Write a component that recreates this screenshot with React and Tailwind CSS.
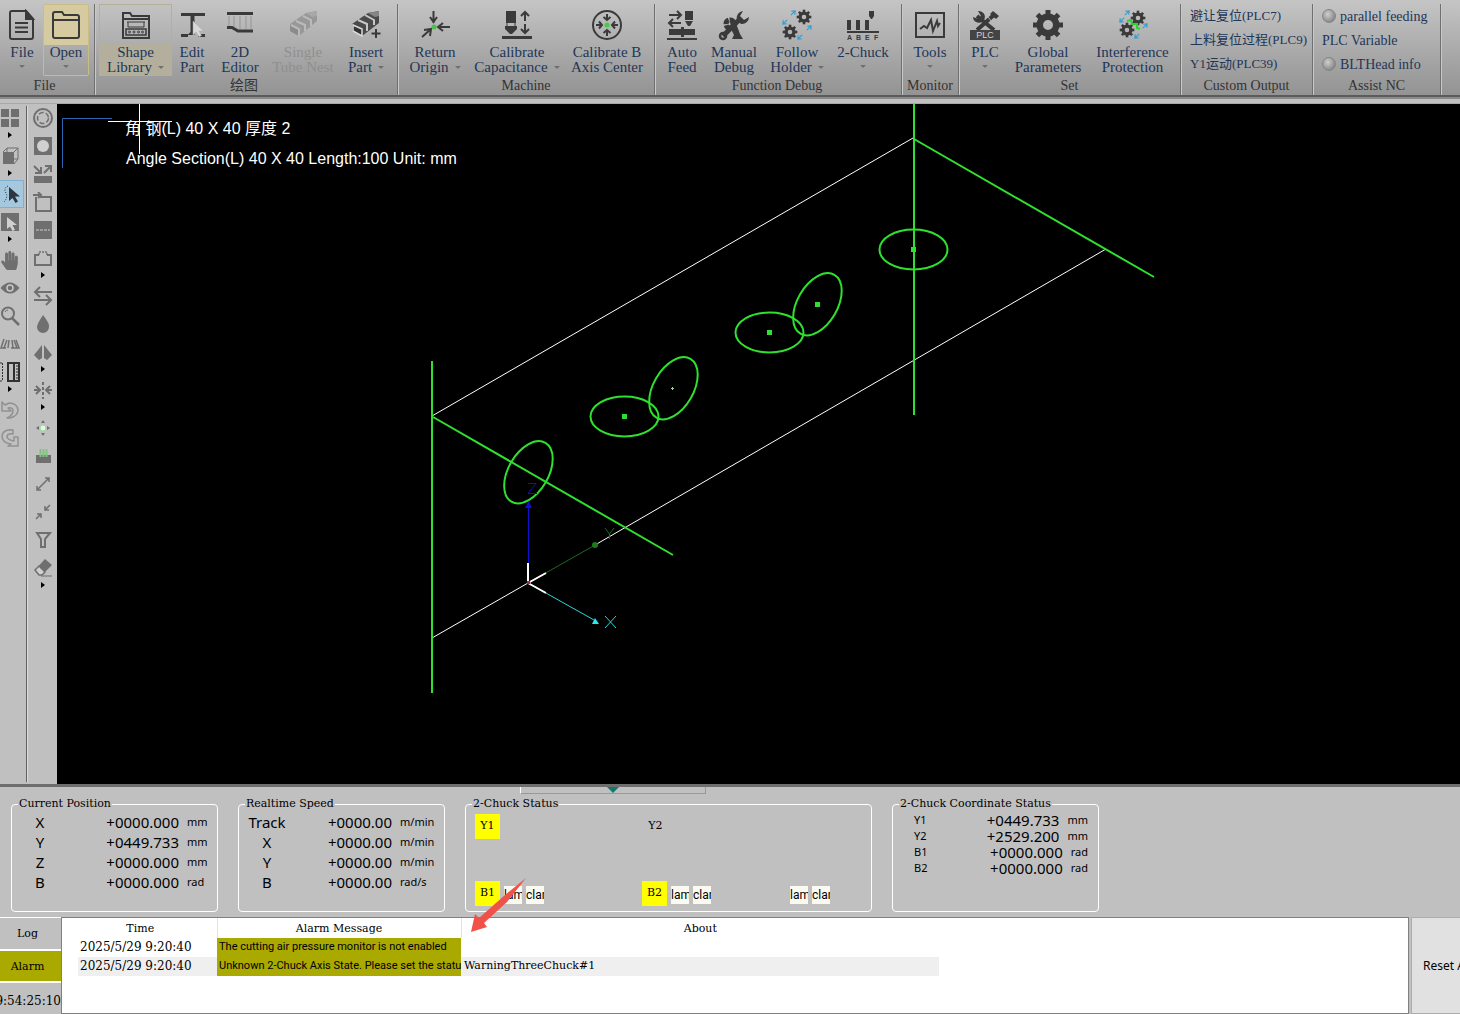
import React from "react";
import { FaHandPaper, FaTint } from "react-icons/fa";

const INK = "#3a3a3a";
const GREY = "#6f6f6f";

/* ---------- shared drawing helpers ---------- */

function Gear({ cx, cy, r, ring, teeth = 8, tooth = 3, color = INK }) {
  const items = Array.from({ length: teeth }, (_, i) => (i * 360) / teeth);
  return (
    <g>
      <circle cx={cx} cy={cy} r={r - ring / 2} fill="none" stroke={color} strokeWidth={ring} />
      {items.map((a) => (
        <rect
          key={a}
          x={cx - tooth / 2}
          y={cy - r - tooth * 0.7}
          width={tooth}
          height={tooth}
          fill={color}
          stroke="none"
          transform={`rotate(${a} ${cx} ${cy})`}
        />
      ))}
    </g>
  );
}

function Big({ children }) {
  return (
    <svg viewBox="0 0 32 32" className="h-8 w-8" fill="none" stroke={INK} strokeWidth="2" aria-hidden="true">
      {children}
    </svg>
  );
}

function Small({ children }) {
  return (
    <svg viewBox="0 0 20 20" className="h-5 w-5 shrink-0" fill="none" stroke={GREY} strokeWidth="2" aria-hidden="true">
      {children}
    </svg>
  );
}

function BlueArrows({ list }) {
  return list.map(([x, y, a]) => (
    <g key={`${x}-${y}`} transform={`translate(${x} ${y}) rotate(${a})`} stroke="#2f9fd6" strokeWidth="1.2">
      <path d="M-3 0H2M0 -2.500L3 0L0 2.500" />
    </g>
  ));
}

/* ---------- ribbon icons ---------- */

const icons = {
  file: (
    <Big>
      <path d="M6 2h14l7 8v18a2 2 0 0 1-2 2H6a2 2 0 0 1-2-2V4a2 2 0 0 1 2-2z" />
      <path d="M20 2v8h7z" fill={INK} />
      <path d="M9 14h13M9 18.500h13M9 23h13" />
    </Big>
  ),
  open: (
    <Big>
      <path d="M3 11V5a2 2 0 0 1 2-2h7l2 3h13a2 2 0 0 1 2 2v19a2 2 0 0 1-2 2H5a2 2 0 0 1-2-2V11h26" />
    </Big>
  ),
  shape: (
    <Big>
      <path d="M3 8V4h7l2 3h17v22H3V8M3 10h26" />
      <path d="M7 13h18M8 13v5h16v-5" strokeWidth="1" />
      <rect x="6" y="20" width="20" height="6" strokeWidth="1.500" />
      <g strokeWidth="1">
        <circle cx="9.500" cy="23" r="1" /><circle cx="14" cy="23" r="1" />
        <circle cx="18.500" cy="23" r="1" /><circle cx="22.500" cy="23" r="1" />
      </g>
    </Big>
  ),
  edit: (
    <Big>
      <path d="M5 5.500h24M5 26.500h7M22 26.500h7" strokeWidth="3" />
      <path d="M14.500 6h4v20h-7l3-3z" fill={INK} stroke="none" />
      <path d="M17 12v14l3-3 3 5 2.500-1.500L23 22h4.500z" fill="#d8d8d8" stroke="#a8a8a8" strokeWidth="0.500" />
    </Big>
  ),
  editor2d: (
    <Big>
      <path d="M3 4.500h26" strokeWidth="3" />
      <path d="M5 7v10M10 7v11M16 7v13M22 7v13M27 7v13" stroke="#959595" strokeWidth="1" />
      <path d="M3 18.500h5l6 3.500h15" strokeWidth="3" />
    </Big>
  ),
  nest: (
    <Big>
      <g stroke="none">
        <path d="M3 15L19 4l11-2v10L12 27l-9-5z" fill="#989898" />
        <path d="M19 4l11-2v5l-5 1z" fill="#a8a8a8" />
        <path d="M3 16l9 4v7l-9-5z" fill="#8b8b8b" />
        <path d="M4 16l8 4v7M9 12l9 4v6M16 7l8 4v6" fill="none" stroke="#bababa" strokeWidth="2" />
      </g>
    </Big>
  ),
  insert: (
    <Big>
      <g stroke="none">
        <path d="M2 15L18 4l11-2v12L12 27l-10-5z" fill="#4a4a4a" />
        <path d="M18 4l11-2v5l-4 1z" fill="#858585" />
        <path d="M3 16l9 4v7l-9-5z" fill="#333" stroke="#dcdcdc" strokeWidth="1.500" />
        <path d="M8 11l9 4v7M15 6l9 5v5" fill="none" stroke="#c6c6c6" strokeWidth="2" />
      </g>
      <path d="M26 20v9M21.500 24.500h9" />
    </Big>
  ),
  origin: (
    <Big>
      <path d="M14.500 2v12M11 8l3.500 5L18 8M31 18H19M24 14l-5 4 5 4M3 28l9-8M5 21l7-1-1 7" />
      <circle cx="15" cy="18" r="2.500" fill="#4bbf4b" stroke="none" />
    </Big>
  ),
  capacitance: (
    <Big>
      <g fill={INK} stroke="none">
        <rect x="5" y="2" width="10" height="12" />
        <path d="M4 17h12v3l-5 5H9l-5-5z" />
        <rect x="1" y="27" width="30" height="3" />
      </g>
      <path d="M6 14v3M14 14v3" strokeWidth="1" />
      <path d="M24 12V3M20 7l4-4 4 4M24 15v9M20 20l4 4 4-4" />
    </Big>
  ),
  center: (
    <Big>
      <circle cx="16" cy="16" r="14" />
      <path d="M16 5v6M12.500 8l3.500 3 3.500-3M16 27v-6M12.500 24l3.500-3 3.500 3M5 16h6M8 12.500l3 3.500-3 3.500M27 16h-6M24 12.500L21 16l3 3.500" />
      <circle cx="16" cy="16" r="2.500" fill="#3fd03f" stroke="none" />
    </Big>
  ),
  feed: (
    <Big>
      <path d="M3 6h12M11 2l4 4-4 4M15 14H3M7 10l-4 4 4 4" />
      <g fill={INK} stroke="none">
        <rect x="19" y="2" width="8" height="9" />
        <path d="M19 12h8l-3 5h-2z" />
        <rect x="3" y="20" width="26" height="6" />
        <rect x="15" y="18" width="3" height="10" />
        <rect x="1" y="29" width="30" height="2" />
      </g>
    </Big>
  ),
  manual: (
    <Big>
      <path d="M5 27L23 9" strokeWidth="5" />
      <path d="M25 2a7 7 0 0 0-6 9l4 4a7 7 0 0 0 8-7l-5 3-4-4z" fill={INK} stroke="none" />
      <circle cx="5" cy="27" r="3" strokeWidth="2.500" />
      <circle cx="12" cy="15" r="4" strokeWidth="5" strokeDasharray="5 1" />
      <path d="M12 13l7 4 3 8 3 5H14l2-4-2-4z" fill={INK} stroke="none" />
    </Big>
  ),
  follow: (
    <Big>
      <Gear cx={9} cy={23} r={5.5} ring={3.2} tooth={2.6} />
      <Gear cx={23} cy={8} r={5.5} ring={3.2} tooth={2.6} />
      <BlueArrows list={[[4, 13, 135], [12, 4, -45], [28, 19, -45], [19, 28, 135]]} />
    </Big>
  ),
  chuck: (
    <svg viewBox="0 0 32 32" className="h-8 w-8" aria-hidden="true">
      <g fill={INK}>
        <rect x="0" y="11" width="4" height="10" /><rect x="9" y="11" width="4" height="10" />
        <rect x="18" y="11" width="4" height="10" /><path d="M22 2h5v5l-2 3h-1l-2-3z" />
        <rect x="0" y="22" width="32" height="2" />
      </g>
      <text x="0" y="31" fontSize="7" fontWeight="700" fontFamily="Liberation Sans, sans-serif" fill={INK}>
        <tspan x="0">A</tspan><tspan x="9">B</tspan><tspan x="18">E</tspan><tspan x="27">F</tspan>
      </text>
    </svg>
  ),
  tools: (
    <Big>
      <rect x="2" y="4" width="28" height="24" />
      <path d="M6 20l4-3 3 2 4-8 2 11 4-10 1 5 2-3" />
    </Big>
  ),
  plc: (
    <svg viewBox="0 0 32 32" className="h-8 w-8" aria-hidden="true">
      <path d="M8 7l17 14M8 21L26 5" stroke={INK} strokeWidth="4" />
      <path d="M4 8a6 6 0 0 0 9 5l2-2a6 6 0 0 0-6-9l3 5-3 3z" fill={INK} />
      <path d="M19 8l4 5M23 4l5 5" stroke="#b4b4b4" strokeWidth="1" />
      <path d="M24 2l6 5-3 3-6-5z" fill={INK} />
      <rect x="1" y="21" width="30" height="10" fill="#444" />
      <text x="16" y="29" textAnchor="middle" fontSize="9" fontFamily="Liberation Sans, sans-serif" fill="#d0d0d0">PLC</text>
    </svg>
  ),
  global: (
    <Big>
      <Gear cx={16} cy={16} r={11.5} ring={6.5} tooth={5} />
    </Big>
  ),
  interference: (
    <Big>
      <Gear cx={10} cy={21} r={5.5} ring={3.2} tooth={2.6} />
      <Gear cx={21} cy={9} r={5.5} ring={3.2} tooth={2.6} />
      <path d="M10 12l4-1 1 4 5 0 0 4 3 1" stroke="#27d627" />
      <BlueArrows list={[[5, 11, 135], [10, 4, -45], [28, 17, -45], [20, 27, 135]]} />
    </Big>
  ),
};

/* ---------- ribbon ---------- */

function Caret() {
  return <span className="inline-block border-x-3 border-t-3 border-x-transparent border-t-[#707070]" aria-hidden="true" />;
}

function RibbonButton({ icon, lines, width, caret, disabled, tone = "" }) {
  const two = lines.length > 1;
  return (
    <button
      type="button"
      disabled={disabled}
      className={`flex h-[72px] shrink-0 flex-col items-center border ${width} ${
        tone || "border-transparent"
      } ${disabled ? "text-[#8f8f8f]" : "text-[#1e3657]"}`}
    >
      <span className={`flex h-10 w-full items-center justify-center ${tone.includes("c9bd86") ? "bg-[#d6cba0]" : ""}`}>
        {icons[icon]}
      </span>
      <span className="flex flex-col items-center text-[15px] leading-[15px] whitespace-nowrap">
        <span>{lines[0]}</span>
        {two ? (
          <span className="flex items-center gap-1.5">
            {lines[1]}
            {caret && <Caret />}
          </span>
        ) : (
          <span className="flex h-[12px] items-center">{caret && <Caret />}</span>
        )}
      </span>
    </button>
  );
}

function Group({ title, width, children, list }) {
  return (
    <section className={`flex shrink-0 flex-col border-r border-[#6f6f6f] shadow-[1px_0_0_#c9c9c9] ${width}`}>
      <div className={`h-[74px] ${list ? "flex flex-col items-start px-[9px] text-[#1e3657]" : "flex"}`}>{children}</div>
      <h2 className="text-center text-[14px] leading-4 text-[#333]">{title}</h2>
    </section>
  );
}

function ListButton({ children, led, size = "text-[14px]" }) {
  return (
    <button type="button" className={`flex h-6 shrink-0 items-center gap-1 whitespace-nowrap ${size}`}>
      {led && (
        <span className="h-3.5 w-3.5 rounded-full border border-[#858585] bg-radial-[at_40%_35%] from-[#cfcfcf] to-[#6f6f6f]" aria-hidden="true" />
      )}
      {children}
    </button>
  );
}

function Ribbon() {
  return (
    <header className="flex h-[97px] overflow-hidden border-b-2 border-[#5b5b5b] bg-linear-to-b from-[#c5c5c5] to-[#939393] pt-1 font-['Liberation_Serif','Noto_Sans_CJK_SC',serif]">
      <Group title="File" width="w-[95px] pl-px pr-1.5">
        <RibbonButton icon="file" lines={["File"]} width="w-[42px]" caret />
        <RibbonButton icon="open" lines={["Open"]} width="w-[46px]" caret tone="border-[#c9bd86] rounded-xs" />
      </Group>
      <Group title="绘图" width="w-[303px] pl-1 pr-2">
        <RibbonButton icon="shape" lines={["Shape", "Library"]} width="w-[73px]" caret tone="border-[#b5b095] bg-linear-to-b from-transparent from-55% to-[#b3af9c] to-55%" />
        <RibbonButton icon="edit" lines={["Edit", "Part"]} width="w-10" />
        <RibbonButton icon="editor2d" lines={["2D", "Editor"]} width="w-14" />
        <RibbonButton icon="nest" lines={["Single", "Tube Nest"]} width="w-[70px]" disabled />
        <RibbonButton icon="insert" lines={["Insert", "Part"]} width="w-14" caret />
      </Group>
      <Group title="Machine" width="w-[257px]">
        <RibbonButton icon="origin" lines={["Return", "Origin"]} width="w-[74px]" caret />
        <RibbonButton icon="capacitance" lines={["Calibrate", "Capacitance"]} width="w-[90px]" caret />
        <RibbonButton icon="center" lines={["Calibrate B", "Axis Center"]} width="w-[90px]" />
      </Group>
      <Group title="Function Debug" width="w-[247px] pl-0.5 pr-1">
        <RibbonButton icon="feed" lines={["Auto", "Feed"]} width="w-[50px]" />
        <RibbonButton icon="manual" lines={["Manual", "Debug"]} width="w-[54px]" />
        <RibbonButton icon="follow" lines={["Follow", "Holder"]} width="w-[72px]" caret />
        <RibbonButton icon="chuck" lines={["2-Chuck"]} width="w-[60px]" caret />
      </Group>
      <Group title="Monitor" width="w-[57px]">
        <RibbonButton icon="tools" lines={["Tools"]} width="w-14" caret />
      </Group>
      <Group title="Set" width="w-[222px]">
        <RibbonButton icon="plc" lines={["PLC"]} width="w-[52px]" caret />
        <RibbonButton icon="global" lines={["Global", "Parameters"]} width="w-[74px]" />
        <RibbonButton icon="interference" lines={["Interference", "Protection"]} width="w-[95px]" />
      </Group>
      <Group title="Custom Output" width="w-[132px]" list>
        <ListButton size="text-[13px]">避让复位(PLC7)</ListButton>
        <ListButton size="text-[13px]">上料复位过程(PLC9)</ListButton>
        <ListButton size="text-[13px]">Y1运动(PLC39)</ListButton>
      </Group>
      <Group title="Assist NC" width="w-[128px]" list>
        <ListButton led>parallel feeding</ListButton>
        <ListButton>PLC Variable</ListButton>
        <ListButton led>BLTHead info</ListButton>
      </Group>
    </header>
  );
}

/* ---------- side toolbars ---------- */

const side = {
  grid: <Small><path d="M1 1h8v8H1zM11 1h8v8h-8zM1 11h8v8H1zM11 11h8v8h-8z" fill={GREY} stroke="none" /></Small>,
  cube: (
    <Small>
      <path d="M3 6h11v12H3z" fill={GREY} stroke="none" />
      <path d="M3 6l4-4h11v11l-4 5M14 6l4-4M7 2v10M7 13h11" strokeWidth="1" />
    </Small>
  ),
  select: (
    <Small>
      <path d="M7 3v14l3.500-3 3 5 2.500-1.500-3-5H18z" fill="#2b3640" stroke="none" />
      <path d="M6 2C3 3 2 6 4 9s0 7-2 9" stroke="#2b3640" strokeWidth="1" strokeDasharray="1 1.500" />
    </Small>
  ),
  box: (
    <Small>
      <path d="M1 1h18v18H1z" fill={GREY} stroke="none" />
      <path d="M7 5v12l3-2.500 2.500 4.500 2.500-1-2.500-5H17z" fill="#d0d0d0" stroke="none" />
    </Small>
  ),
  hand: <FaHandPaper size={19} color={GREY} aria-hidden="true" />,
  eye: (
    <Small>
      <path d="M0.500 10q9.500-11 19 0q-9.500 11-19 0z" fill={GREY} stroke="none" />
      <circle cx="10" cy="10" r="3" stroke="#c8c8c8" strokeWidth="1.500" />
    </Small>
  ),
  zoom: <Small><circle cx="8" cy="7.500" r="6" /><path d="M12 12l7 7" strokeWidth="2.500" /><path d="M5 6q1-2 3-2" strokeWidth="1" /></Small>,
  road: <Small><path d="M4 5L1 14h5M7 6l-3 8M9 6l-1 8M12 6l1 8M14 6l3 8M16 6l3 8h-8" strokeWidth="1.500" /></Small>,
  ruler: (
    <svg viewBox="0 0 20 20" className="h-5 w-5 shrink-0" fill="none" stroke="#303030" aria-hidden="true">
      <path d="M8 1h11v18H8zM14 1v18" strokeWidth="2" />
      <path d="M16 4h2M16 7h2M16 10h2M16 13h2M16 16h2" />
      <path d="M2.500 1v18M0 1h3M0 19h3" strokeDasharray="2 1" />
    </svg>
  ),
  undo: (
    <Small>
      <path d="M2 2v9h9L8 8q5-1 5 3t-6 7h3q8-2 8-8Q17 3 9 3L5 5z" stroke="#919191" strokeWidth="1.500" strokeLinejoin="round" />
    </Small>
  ),
  redo: (
    <Small>
      <path d="M18 18V9h-4v4Q8 12 7 9q0-4 6-3V2Q3 1 2 8q0 7 9 8l-3 2z" stroke="#919191" strokeWidth="1.500" strokeLinejoin="round" />
    </Small>
  ),
  ring: <Small><circle cx="10" cy="10" r="9" /><circle cx="10" cy="10" r="5.500" strokeWidth="1.500" strokeDasharray="5 2" /></Small>,
  hole: <Small><path d="M1 1h18v18H1z" fill={GREY} stroke="none" /><circle cx="10" cy="10" r="6" fill="#d0d0d0" stroke="none" /></Small>,
  split: <Small><path d="M1 12h18v7H1z" fill={GREY} stroke="none" /><path d="M1 2l7 7M8 3v6H2M11 9l7-7M12 2h6v6" /></Small>,
  corner: <Small><path d="M3 5v14h15V5H7M0 3h8M5 0l3 3-3 3" /></Small>,
  dash: <Small><path d="M1 1h18v18H1z" fill={GREY} stroke="none" /><path d="M3 10h14" stroke="#ccc" strokeWidth="1" strokeDasharray="3 1" /></Small>,
  bridge: <Small><path d="M6 7H2v10h16V7h-4" /><path d="M6 4h8M6 7V4M14 7V4" strokeWidth="1.500" strokeDasharray="2 1" /></Small>,
  swap: <Small><path d="M19 6H2M7 1L2 6l5 5M1 14h17M13 9l5 5-5 5" /></Small>,
  drop: (
    <Small><path d="M10 1q7 9 6 12a6 6 0 0 1-12 0Q4 10 10 1z" fill={GREY} stroke="none" /></Small>
  ),
  mirror: <Small><path d="M9 3v13l-3 2-5-5zM11 3v13l3 2 5-5z" fill={GREY} stroke="none" /></Small>,
  flip: <Small><path d="M10 2v17" strokeDasharray="3 2" /><path d="M1 10h6M3 6l4 4-4 4M19 10h-6M17 6l-4 4 4 4" /></Small>,
  spark: (
    <Small>
      <circle cx="10" cy="10" r="3" fill="#e4f5e4" stroke="#9fd79f" strokeWidth="1" />
      <path d="M10 2l2 3H8zM10 18l2-3H8zM3 10l3-2v4zM17 10l-3-2v4z" fill={GREY} stroke="none" />
    </Small>
  ),
  cool: <Small><path d="M3 9h15v8H3z" fill={GREY} stroke="none" /><path d="M7.500 3v8M10.500 3v8M13.500 3v8" stroke="#7fc47f" /></Small>,
  extend: <Small><path d="M5 15L16 4M12 4h4v4M4 12v4h4" strokeWidth="1.500" /></Small>,
  shrink: <Small><path d="M3 17l5-5M4 12h4v4M17 3l-5 5M12 4v4h4" strokeWidth="1.500" /></Small>,
  funnel: <Small><path d="M4 3h13l-5 6v8H8V9z" strokeWidth="2" /></Small>,
  eraser: (
    <Small>
      <path d="M2 12L12 1l7 6L9 17z" fill={GREY} stroke="none" />
      <path d="M2 12l4-4 6 6-3 3H6z" fill="#d0d0d0" stroke={GREY} strokeWidth="1.500" />
      <path d="M8 18h11" strokeWidth="1" />
    </Small>
  ),
};

const leftTools = [
  ["grid", "View layout", true], ["cube", "3D view", true], ["select", "Select"], ["box", "Box select", true],
  ["hand", "Pan"], ["eye", "Show"], ["zoom", "Zoom"], ["road", "Perspective"], ["ruler", "Measure", true],
  ["undo", "Undo"], ["redo", "Redo"],
];
const rightTools = [
  ["ring", "Contour"], ["hole", "Hole"], ["split", "Split"], ["corner", "Start point"], ["dash", "Scan line"],
  ["bridge", "Micro joint", true], ["swap", "Reverse"], ["drop", "Coolant"], ["mirror", "Mirror", true],
  ["flip", "Flip", true], ["spark", "Center"], ["cool", "Cooling point"], ["extend", "Extend"],
  ["shrink", "Shrink"], ["funnel", "Filter"], ["eraser", "Erase", true],
];

function ToolColumn({ tools, width, start }) {
  return (
    <div className={`flex flex-col ${width}`}>
      {tools.map(([id, label, more]) => (
        <React.Fragment key={id}>
          <button
            type="button"
            aria-label={label}
            className={`flex h-7 items-center ${start ? "justify-start" : "justify-center"} ${
              id === "select" ? "border border-l-0 border-[#7fb0d2] bg-[#a5c8df] pl-0.5" : ""
            }`}
          >
            {side[id]}
          </button>
          {more && (
            <span className={`flex h-2.5 ${start ? "pl-2" : "justify-center"}`} aria-hidden="true">
              <span className="h-0 border-y-3 border-l-4 border-y-transparent border-l-black" />
            </span>
          )}
        </React.Fragment>
      ))}
    </div>
  );
}

/* ---------- drawing canvas ---------- */

const G = "#2fe02f";

function Canvas() {
  const flat = [[913, 249], [769, 332], [624, 416]];
  const tilted = [[817, 304], [673, 388], [528, 472]];
  const dots = [[913, 249], [817, 304], [769, 332], [624, 416]];
  return (
    <main className="min-w-0 flex-1 bg-black">
      <svg className="h-full w-full" fill="none" role="img" aria-label="Angle section preview">
        <g transform="translate(-57 -104)">
          <g stroke="#ffffff" strokeWidth="1">
            <path d="M432 416L913 138M1106 249L595 545M528 583L432 638" />
          </g>
          <g stroke={G} strokeWidth="2">
            <path d="M432 361V693M914 104V415M914 139L1154 277M433 417L673 555" />
            {flat.map(([x, y]) => <ellipse key={x} cx={x + 0.5} cy={y + 0.5} rx="34" ry="20" />)}
            {tilted.map(([x, y]) => (
              <ellipse key={x} cx={x} cy={y + 0.5} rx="34" ry="20" transform={`rotate(-60 ${x} ${y})`} />
            ))}
          </g>
          {dots.map(([x, y]) => <rect key={x} x={x - 2} y={y - 2} width="5" height="5" fill={G} />)}
          <path d="M671 388.500h3M672.500 387v3" stroke="#8fe08f" />
          <path d="M528.500 583V507" stroke="#1010d0" />
          <path d="M525 508l3.500-7 3.500 7z" fill="#1010d0" />
          <path d="M528 583L595 545" stroke="#1c6a1c" />
          <circle cx="595" cy="545" r="3" fill="#1c7a1c" />
          <path d="M528 583L594 620" stroke="#28d8d8" />
          <path d="M599 624h-7l3-6z" fill="#28e8f0" />
          <path d="M528 583V563M528 583L546 573M528 583L546 593" stroke="#fff" strokeWidth="2" />
          <rect x="527" y="581" width="3" height="3" fill="#c02040" />
          <path d="M528 483.500h8l-8 10h9" stroke="#1010d0" />
          <path d="M605 528l4.500 6 4.500-6M609.500 534v5" stroke="#1c6a1c" />
          <path d="M605 616l11 12M616 616l-11 12" stroke="#28d8d8" />
          <path d="M62.500 168V118.500H112" stroke="#2d66b4" />
          <path d="M108 121.500H172M139.500 104V154" stroke="#fff" />
          <g fill="#fff" fontSize="16" fontFamily="'Liberation Sans', 'Noto Sans CJK SC', sans-serif">
            <text x="125" y="134">角 钢(L) 40 X 40 厚度 2</text>
            <text x="126" y="164">Angle Section(L) 40 X 40 Length:100 Unit: mm</text>
          </g>
        </g>
      </svg>
    </main>
  );
}

/* ---------- status panels ---------- */

function Panel({ title, width, children }) {
  return (
    <fieldset className={`h-[115px] shrink-0 rounded-[4px] border border-white ${width}`}>
      <legend className="ml-1.5 px-px text-[11px] leading-[14px]">{title}</legend>
      {children}
    </fieldset>
  );
}

function Readouts({ rows, valueWidth }) {
  return (
    <dl className="pt-px font-['Noto_Sans',sans-serif]">
      {rows.map(([name, value, unit]) => (
        <div key={name} className="flex h-5 items-center">
          <dt className="w-14 text-center text-[15px] leading-5">{name}</dt>
          <dd className={`text-right text-[15px] leading-5 ${valueWidth}`}>{value}</dd>
          <dd className="pl-2 text-[11px] leading-5">{unit}</dd>
        </div>
      ))}
    </dl>
  );
}

function Cell({ name, on, lamps, width }) {
  return (
    <div className={`flex ${width}`}>
      {name && (
        <span className={`mr-1 flex h-[25px] w-[25px] items-center justify-center text-[11px] ${on ? "bg-[#ffff00]" : ""}`}>
          {name}
        </span>
      )}
      {lamps &&
        ["lamp", "clamp"].map((t) => (
          <span
            key={t}
            className="mt-[5px] mr-1 h-[18px] w-[18px] overflow-hidden bg-[#fbfaf1] font-['Roboto',sans-serif] text-[12px] leading-[18px]"
          >
            {t}
          </span>
        ))}
    </div>
  );
}

function StatusPanels() {
  return (
    <section className="relative flex gap-5 overflow-hidden border-t-3 border-[#6e6e6e] bg-[#c0c0c0] px-[11px] pt-[10px] pb-[5px]">
      <button
        type="button"
        aria-label="Collapse panel"
        className="absolute top-0 left-[520px] flex h-[7px] w-[186px] justify-center border-r border-b border-l border-r-[#999] border-b-[#999] border-l-white"
      >
        <span className="border-x-6 border-t-6 border-x-transparent border-t-[#107a6c]" />
      </button>
      <Panel title="Current Position" width="w-[207px]">
        <Readouts
          valueWidth="w-[111px]"
          rows={[["X", "+0000.000", "mm"], ["Y", "+0449.733", "mm"], ["Z", "+0000.000", "mm"], ["B", "+0000.000", "rad"]]}
        />
      </Panel>
      <Panel title="Realtime Speed" width="w-[207px]">
        <Readouts
          valueWidth="w-[97px]"
          rows={[["Track", "+0000.00", "m/min"], ["X", "+0000.00", "m/min"], ["Y", "+0000.00", "m/min"], ["B", "+0000.00", "rad/s"]]}
        />
      </Panel>
      <Panel title="2-Chuck Status" width="w-[407px]">
        <div className="flex h-[95px] flex-col justify-between px-[9px] pt-[3px]">
          <div className="flex">
            <Cell name="Y1" on width="w-[168px]" />
            <Cell name="Y2" width="w-[147px]" />
          </div>
          <div className="flex">
            <Cell name="B1" on lamps width="w-[167px]" />
            <Cell name="B2" on lamps width="w-[148px]" />
            <Cell lamps width="w-12" />
          </div>
        </div>
      </Panel>
      <Panel title="2-Chuck Coordinate Status" width="w-[207px]">
        <dl className="pt-px pr-2.5 pl-[21px] font-['Noto_Sans',sans-serif]">
          {[["Y1", "+0449.733", "mm"], ["Y2", "+2529.200", "mm"], ["B1", "+0000.000", "rad"], ["B2", "+0000.000", "rad"]].map(
            ([name, value, unit]) => (
              <div key={name} className="flex h-4 items-center">
                <dt className="flex-1 text-[11px] leading-4">{name}</dt>
                <dd className="text-[15px] leading-4">{value}</dd>
                <dd className="pl-2 text-[11px] leading-4">{unit}</dd>
              </div>
            )
          )}
        </dl>
      </Panel>
    </section>
  );
}

/* ---------- alarm log ---------- */

function AlarmLog() {
  const alarm = "overflow-hidden bg-[#a9a900] pl-0.5 font-['Roboto',sans-serif] text-[11px] whitespace-nowrap";
  return (
    <section className="relative flex h-[97px] bg-[#c0c0c0]">
      <nav className="flex w-[61px] shrink-0 flex-col overflow-hidden">
        <button type="button" className="h-[34px] border-t border-b-2 border-white pt-0.5 pr-1.5 text-[11px]">Log</button>
        <button type="button" className="h-[32px] border-b-2 border-white bg-[#a9a900] pt-0.5 pr-1.5 text-[11px]">Alarm</button>
        <time className="flex h-[31px] items-center justify-end pt-1 text-[12px] whitespace-nowrap">9:54:25:10</time>
      </nav>
      <div className="min-w-0 flex-1 border border-[#808080] bg-white">
        <table className="ml-0.5 w-[875px] table-fixed border-collapse text-[11px]">
          <colgroup>
            <col className="w-[14px]" />
            <col className="w-[139px]" />
            <col className="w-[244px]" />
            <col />
          </colgroup>
          <thead>
            <tr className="h-[20px]">
              <th colSpan={2} className="border-r border-[#e3e3e3] p-0 pt-0.5 font-normal">Time</th>
              <th className="border-r border-[#e3e3e3] p-0 pt-0.5 font-normal">Alarm Message</th>
              <th className="p-0 pt-0.5 font-normal">About</th>
            </tr>
          </thead>
          <tbody>
            <tr className="h-[19px]">
              <td className="p-0" />
              <td className="p-0 pl-0.5 text-[12px] leading-[19px]">2025/5/29 9:20:40</td>
              <td className={`p-0 ${alarm}`}>The cutting air pressure monitor is not enabled</td>
              <td className="p-0" />
            </tr>
            <tr className="h-[19px]">
              <td className="p-0" />
              <td className="bg-[#efefef] p-0 pl-0.5 text-[12px] leading-[19px]">2025/5/29 9:20:40</td>
              <td className={`p-0 ${alarm}`}>Unknown 2-Chuck Axis State. Please set the statu</td>
              <td className="bg-[#efefef] p-0 pl-[3px]">WarningThreeChuck#1</td>
            </tr>
          </tbody>
        </table>
      </div>
      <button
        type="button"
        className="ml-0.5 w-[49px] shrink-0 overflow-hidden border border-r-0 border-[#adadad] bg-[#e1e1e1] pl-[11px] text-left font-['Noto_Sans',sans-serif] text-[12px] whitespace-nowrap"
      >
        Reset Alarm
      </button>
      <svg className="pointer-events-none absolute -top-10 left-[470px] h-14 w-14" viewBox="0 0 56 56" aria-hidden="true">
        <path d="M1 55L5 37L9 41L35 18L56 1L37 25L14 46L17 50z" fill="#f0524a" />
      </svg>
    </section>
  );
}

export default function App() {
  return (
    <div className="flex min-h-screen w-full flex-col overflow-hidden bg-[#c0c0c0] font-['DejaVu_Serif',serif] text-black">
      <Ribbon />
      <div className="h-[7px] border-t-2 border-b border-t-[#8a8a8a] border-b-[#a8a8a8] bg-[#c0c0c0]" />
      <div className="flex flex-1">
        <aside className="flex shrink-0">
          <ToolColumn tools={leftTools} width="w-6 mr-0.5" start />
          <div className="mt-0.5 mb-0.5 w-0.5 border-r border-l border-r-[#dcdcdc] border-l-[#606060]" />
          <ToolColumn tools={rightTools} width="w-[29px]" />
        </aside>
        <Canvas />
      </div>
      <StatusPanels />
      <AlarmLog />
    </div>
  );
}
